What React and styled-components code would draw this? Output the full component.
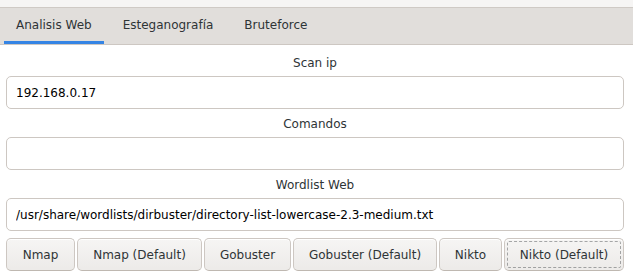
import React from 'react';
import styled, { createGlobalStyle } from 'styled-components';

const GlobalStyle = createGlobalStyle`
  html, body {
    margin: 0;
    padding: 0;
    background: #ffffff;
  }
  body {
    font-family: "DejaVu Sans", "Liberation Sans", sans-serif;
    font-size: 12px;
    color: #2e3436;
  }
`;

const Window = styled.div`
  width: 633px;
  height: 280px;
  background: #ffffff;
  display: flex;
  flex-direction: column;
`;

const TopStrip = styled.div`
  height: 7px;
  background: #f6f5f4;
  border-bottom: 1px solid #cfcac5;
`;

const TabBar = styled.div`
  height: 36px;
  background: #e1dedb;
  border-bottom: 1px solid #cdc7c2;
  display: flex;
  align-items: stretch;
  padding-left: 4px;
  gap: 7px;
`;

const Tab = styled.div`
  padding: 0 12px;
  display: flex;
  align-items: center;
  box-sizing: border-box;
  padding-top: 1px;
  border-bottom: 3px solid ${p => (p.$active ? '#3584e4' : 'transparent')};
  color: #2e3436;
  white-space: nowrap;
`;

const Content = styled.div`
  display: flex;
  flex-direction: column;
  padding: 3px 9px 0 6px;
`;

const Label = styled.div`
  height: 28px;
  display: flex;
  align-items: center;
  justify-content: center;
  padding-top: 1px;
  box-sizing: border-box;
`;

const Entry = styled.input`
  display: block;
  height: 33px;
  box-sizing: border-box;
  width: 100%;
  margin: 0;
  border: 1px solid #cdc7c2;
  border-radius: 5px;
  background: #ffffff;
  padding: 0 9px;
  font-family: "DejaVu Sans", "Liberation Sans", sans-serif;
  font-size: 12px;
  color: #000000;
  outline: none;
`;

const ButtonRow = styled.div`
  display: flex;
  gap: 2px;
  margin-top: 7px;
`;

const Button = styled.button`
  flex: 1 1 ${p => p.$basis}px;
  min-width: 0;
  height: 33px;
  box-sizing: border-box;
  margin: 0;
  padding: 0;
  border: 1px solid #cdc7c2;
  border-bottom-color: #bfb8b1;
  border-radius: 5px;
  background: linear-gradient(to top, #edebe9 2px, #f6f5f4);
  box-shadow: inset 0 1px #ffffff;
  font-family: "DejaVu Sans", "Liberation Sans", sans-serif;
  font-size: 12px;
  color: #2e3436;
  white-space: nowrap;
  outline: ${p => (p.$focused ? '1px dashed rgba(46, 52, 54, 0.4)' : 'none')};
  outline-offset: -4px;
`;

const fields = [
  { label: 'Scan ip', value: '192.168.0.17' },
  { label: 'Comandos', value: '' },
  { label: 'Wordlist Web', value: '/usr/share/wordlists/dirbuster/directory-list-lowercase-2.3-medium.txt' },
];

const buttons = [
  { text: 'Nmap', width: 69 },
  { text: 'Nmap (Default)', width: 125 },
  { text: 'Gobuster', width: 87 },
  { text: 'Gobuster (Default)', width: 144 },
  { text: 'Nikto', width: 63 },
  { text: 'Nikto (Default)', width: 120 },
];

const App = () => {
  return (
    <>
      <GlobalStyle />
      <Window>
        <TopStrip />
        <TabBar>
          <Tab $active>Analisis Web</Tab>
          <Tab>Esteganografía</Tab>
          <Tab>Bruteforce</Tab>
        </TabBar>
        <Content>
          {fields.map(f => (
            <div key={f.label}>
              <Label>{f.label}</Label>
              <Entry defaultValue={f.value} />
            </div>
          ))}
          <ButtonRow>
            {buttons.map((b, i) => (
              <Button key={b.text} $basis={b.width} $focused={i === buttons.length - 1}>
                {b.text}
              </Button>
            ))}
          </ButtonRow>
        </Content>
      </Window>
    </>
  );
};

export default App;
